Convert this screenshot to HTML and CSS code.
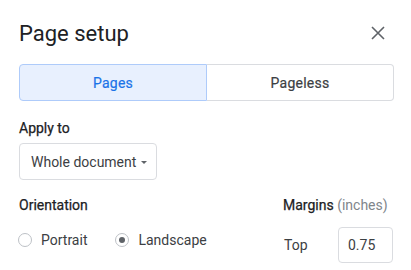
FILE: index.html
```html
<!DOCTYPE html>
<html>
<head>
<meta charset="utf-8">
<link rel="stylesheet" href="styles.css">
</head>
<body>
<div class="dialog">
  <div class="header">
    <div class="title">Page setup</div>
    <div class="close">
      <svg width="24" height="24" viewBox="0 0 24 24"><path d="M6 6L18 18M18 6L6 18" stroke="#5f6368" stroke-width="1.6" fill="none"/></svg>
    </div>
  </div>
  <div class="segmented">
    <div class="seg seg-active">Pages</div>
    <div class="seg">Pageless</div>
  </div>
  <div class="label label-apply">Apply to</div>
  <div class="select">
    <span>Whole document</span>
    <span class="caret"></span>
  </div>
  <div class="bottom">
    <div class="col-orient">
      <div class="label">Orientation</div>
      <div class="radios">
        <div class="radio-item"><span class="radio"></span><span>Portrait</span></div>
        <div class="radio-item"><span class="radio radio-on"></span><span>Landscape</span></div>
      </div>
    </div>
    <div class="col-margins">
      <div class="label">Margins <span class="muted">(inches)</span></div>
      <div class="margin-row">
        <span class="margin-name">Top</span>
        <div class="input">0.75</div>
      </div>
    </div>
  </div>
</div>
</body>
</html>
```

FILE: styles.css
```css
html, body {
  margin: 0;
  padding: 0;
  background: #ffffff;
}
body {
  font-family: Roboto, "Liberation Sans", Arial, sans-serif;
  color: #3c4043;
  font-size: 14px;
  width: 411px;
  height: 270px;
  overflow: hidden;
}
.dialog {
  padding: 20px 17px 0 19px;
}
.header {
  display: flex;
  justify-content: space-between;
  align-items: center;
  height: 28px;
}
.title {
  font-size: 22px;
  line-height: 28px;
  color: #202124;
}
.close {
  width: 24px;
  height: 24px;
  margin-right: 4px;
  margin-top: -2px;
}
.close svg {
  display: block;
}
.segmented {
  display: flex;
  margin-top: 16px;
  height: 37px;
}
.seg {
  flex: 1;
  display: flex;
  align-items: center;
  justify-content: center;
  font-weight: 400;
  color: #3c4043;
  -webkit-text-stroke: 0.2px #3c4043;
  border: 1px solid #dadce0;
  border-left: none;
  border-radius: 0 4px 4px 0;
  box-sizing: border-box;
  letter-spacing: 0.25px;
}
.seg-active {
  background: #e8f0fe;
  color: #1a73e8;
  -webkit-text-stroke: 0.2px #1a73e8;
  border: 1px solid #aecbfa;
  border-radius: 4px 0 0 4px;
}
.label {
  font-weight: 400;
  line-height: 20px;
  color: #202124;
  -webkit-text-stroke: 0.25px #202124;
}
.label-apply {
  margin-top: 17px;
}
.muted {
  font-weight: 400;
  color: #80868b;
  -webkit-text-stroke: 0;
}
.select {
  margin-top: 5px;
  display: inline-flex;
  align-items: center;
  box-sizing: border-box;
  height: 37px;
  width: 138px;
  padding: 0 9px 0 11px;
  border: 1px solid #dadce0;
  border-radius: 4px;
  justify-content: space-between;
}
.caret {
  width: 0;
  height: 0;
  border-left: 3.5px solid transparent;
  border-right: 3.5px solid transparent;
  border-top: 3.5px solid #5f6368;
  margin-top: 1px;
}
.bottom {
  display: flex;
  margin-top: 15px;
}
.col-orient {
  width: 264px;
}
.radios {
  display: flex;
  margin-top: 13px;
  height: 24px;
  align-items: center;
}
.radio-item {
  display: flex;
  align-items: center;
  margin-right: 29px;
}
.radio {
  width: 14px;
  height: 14px;
  box-sizing: border-box;
  border: 1px solid #bdc1c6;
  border-radius: 50%;
  margin-right: 9px;
  display: flex;
  align-items: center;
  justify-content: center;
  margin-left: -1px;
}
.radio-on::after {
  content: "";
  width: 6px;
  height: 6px;
  border-radius: 50%;
  background: #5f6368;
}
.margin-row {
  display: flex;
  align-items: center;
  margin-top: 12px;
}
.margin-name {
  width: 54px;
  margin-left: 1px;
}
.input {
  box-sizing: border-box;
  width: 55px;
  height: 36px;
  border: 1px solid #dadce0;
  border-radius: 4px;
  display: flex;
  align-items: center;
  padding-left: 9px;
}
```
